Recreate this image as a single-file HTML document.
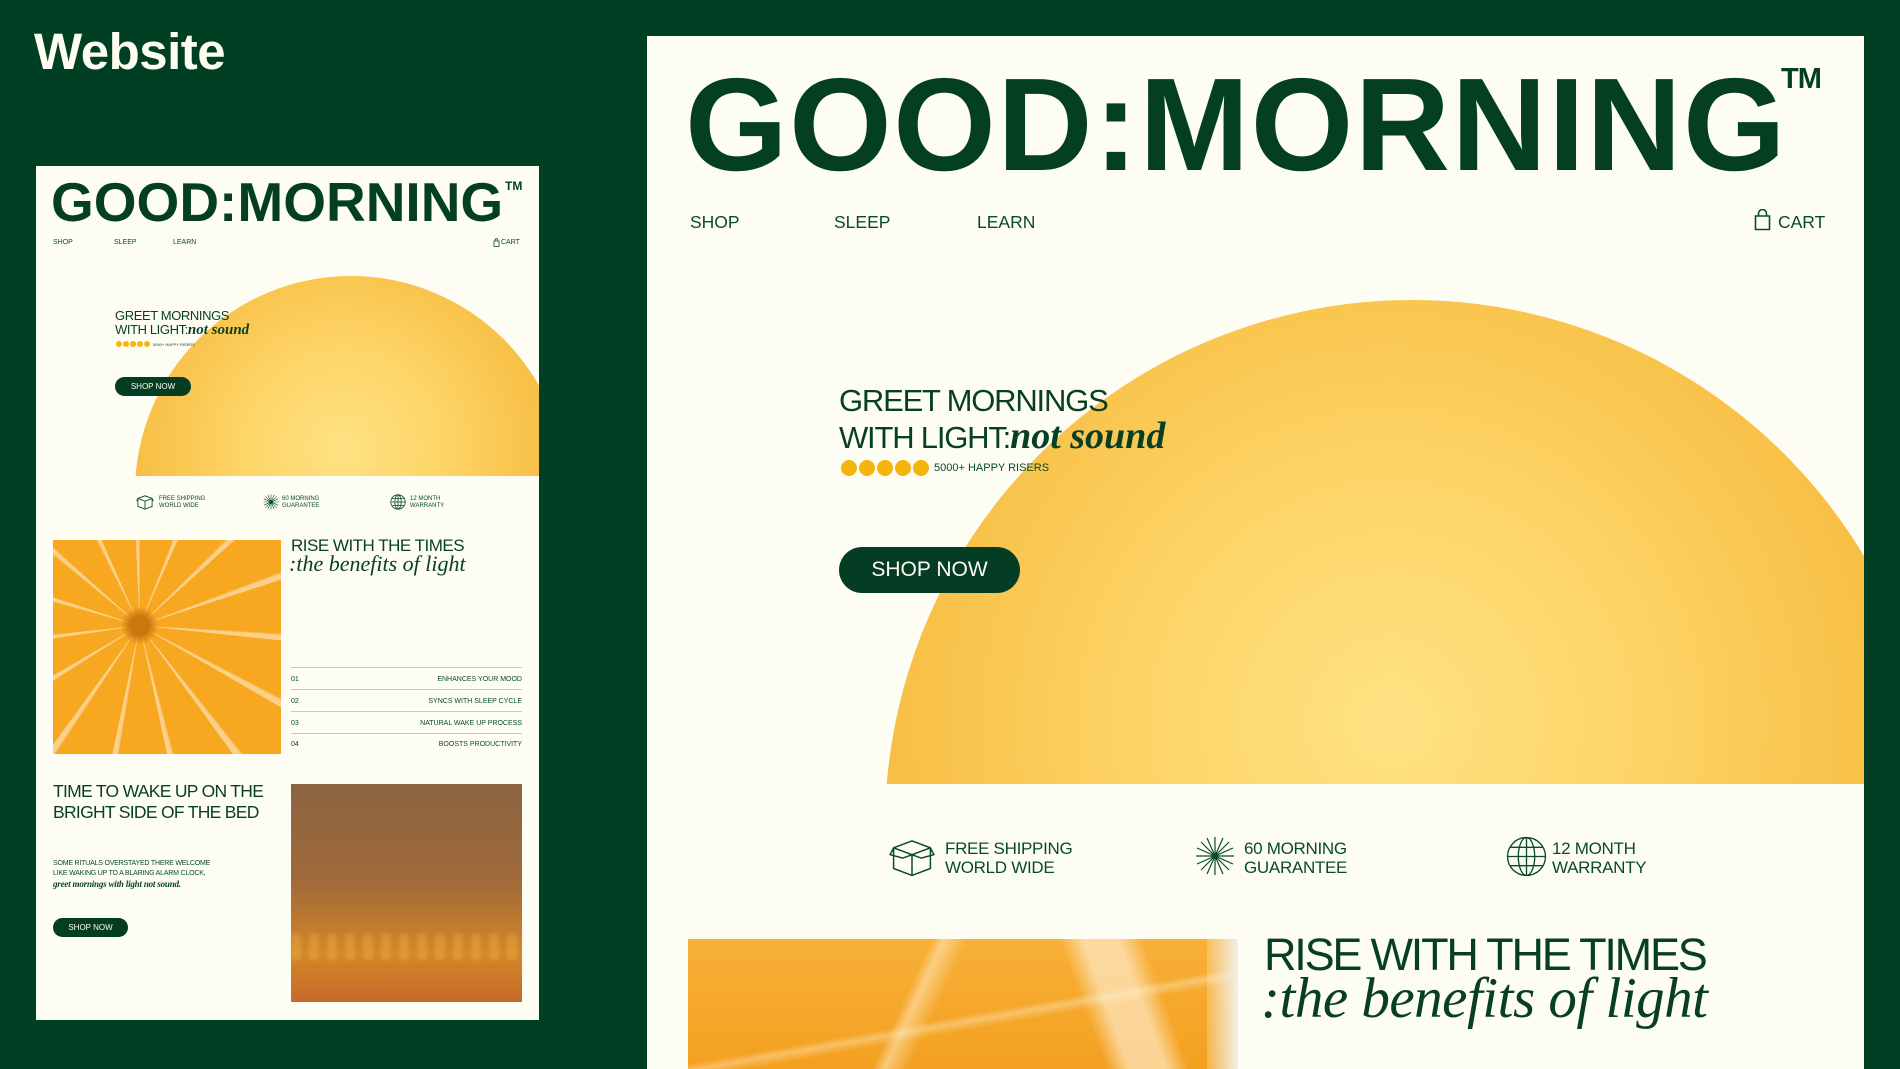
<!DOCTYPE html>
<html><head><meta charset="utf-8"><style>
*{margin:0;padding:0;box-sizing:border-box}
html,body{overflow:hidden}
body{width:1900px;height:1069px;background:#013f25;position:relative;overflow:hidden;font-family:"Liberation Sans",sans-serif;color:#0a4a2c}
.a{position:absolute;white-space:nowrap}
.card{position:absolute;background:#fdfdf3;overflow:hidden}
.g{color:#073f24}
.serif{font-family:"Liberation Serif",serif;font-style:italic}
.btn{position:absolute;background:#043d23;color:#fdfdf3;border-radius:40px;display:flex;align-items:center;justify-content:center}
.logo{font-weight:700;color:#053f23;line-height:1}
</style></head><body>

<div class="a" style="left:34px;top:22px;font-size:51px;font-weight:700;color:#fdfdf0;letter-spacing:-0.5px">Website</div>

<!-- LEFT CARD -->
<div class="card" style="left:36px;top:166px;width:503px;height:854px">
  <div class="a" style="left:0;top:0;width:503px;height:310px;overflow:hidden">
    <div style="position:absolute;left:99px;top:110px;width:432px;height:432px;border-radius:50%;background:radial-gradient(circle at 48% 40%,#fee283 0%,#fdd466 30%,#f7bd42 62%,#ee9f24 90%,#e99520 100%)"></div>
  </div>
  <div class="a logo" style="left:15px;top:9px;font-size:55px">GOOD:MORNING</div>
  <div class="a" style="left:469px;top:13px;font-size:12px;font-weight:700;color:#053f23">TM</div>
  <div class="a" style="left:17px;top:73px;font-size:7px">SHOP</div>
  <div class="a" style="left:78px;top:73px;font-size:7px">SLEEP</div>
  <div class="a" style="left:137px;top:73px;font-size:7px">LEARN</div>
  <svg class="a" style="left:457px;top:72px" width="7" height="9" viewBox="0 0 7 9"><path d="M1 3h5v5.5H1z M2.2 3V2a1.3 1.3 0 012.6 0v1" fill="none" stroke="#0a4a2c" stroke-width=".8"/></svg>
  <div class="a" style="left:465px;top:73px;font-size:7px">CART</div>
  <div class="a g" style="left:79px;top:143px;font-size:13px;line-height:14px;letter-spacing:-.4px">GREET MORNINGS<br>WITH LIGHT:<span class="serif" style="font-size:15px;font-weight:700;letter-spacing:0;line-height:1">not sound</span></div>
  <div class="a" style="left:80px;top:175px;display:flex;gap:1px;align-items:center"><i style="width:6px;height:6px;border-radius:50%;background:#f5b50e"></i><i style="width:6px;height:6px;border-radius:50%;background:#f5b50e"></i><i style="width:6px;height:6px;border-radius:50%;background:#f5b50e"></i><i style="width:6px;height:6px;border-radius:50%;background:#f5b50e"></i><i style="width:6px;height:6px;border-radius:50%;background:#f5b50e"></i><span style="font-size:4px;margin-left:2px">5000+ HAPPY RISERS</span></div>
  <div class="btn" style="left:79px;top:211px;width:76px;height:19px;font-size:8px">SHOP NOW</div>
  <svg class="a" style="left:100px;top:328px" width="18" height="16" viewBox="0 0 40 36"><path d="M4 10l16-6 16 6v18l-16 6-16-6z M4 10l16 6 16-6 M20 16v18 M4 10l-3 6 M36 10l3 6" fill="none" stroke="#0a4a2c" stroke-width="2"/></svg>
  <div class="a" style="left:123px;top:330px;font-size:6px;line-height:7px">FREE SHIPPING<br>WORLD WIDE</div>
  <svg class="a" style="left:227px;top:328px" width="16" height="16" viewBox="0 0 40 40"><g stroke="#0a4a2c" stroke-width="1.5"><path d="M20 1v38M1 20h38M6 6l28 28M34 6L6 34M12 2l16 36M28 2L12 38M2 12l36 16M2 28l36-16"/></g></svg>
  <div class="a" style="left:246px;top:330px;font-size:6px;line-height:7px">60 MORNING<br>GUARANTEE</div>
  <svg class="a" style="left:354px;top:328px" width="16" height="16" viewBox="0 0 40 40"><g fill="none" stroke="#0a4a2c" stroke-width="2"><circle cx="20" cy="20" r="18"/><ellipse cx="20" cy="20" rx="8" ry="18"/><path d="M20 2v36M2 20h36M5 11h30M5 29h30"/></g></svg>
  <div class="a" style="left:374px;top:330px;font-size:6px;line-height:7px">12 MONTH<br>WARRANTY</div>
  <div class="a" style="left:17px;top:374px;width:228px;height:214px;background:radial-gradient(circle at 38% 40%,#c9780e 0 5%,transparent 10%),repeating-conic-gradient(from 0deg at 38% 40%,#f7a820 0 21deg,#fbd08a 22deg 24deg),#f5a11c"></div>
  <div class="a g" style="left:255px;top:370px;font-size:17px;letter-spacing:-.5px">RISE WITH THE TIMES</div>
  <div class="a serif g" style="left:253px;top:385px;font-size:22px">:the benefits of light</div>
  <div class="a" style="left:255px;top:501px;width:231px;border-top:1.5px solid #b8cfc2"></div>
  <div class="a" style="left:255px;top:523px;width:231px;border-top:1.5px solid #b8cfc2"></div>
  <div class="a" style="left:255px;top:545px;width:231px;border-top:1.5px solid #b8cfc2"></div>
  <div class="a" style="left:255px;top:567px;width:231px;border-top:1.5px solid #b8cfc2"></div>
  <div class="a" style="left:255px;top:510px;width:231px;font-size:7px;display:flex;justify-content:space-between"><span>01</span><span>ENHANCES YOUR MOOD</span></div>
  <div class="a" style="left:255px;top:532px;width:231px;font-size:7px;display:flex;justify-content:space-between"><span>02</span><span>SYNCS WITH SLEEP CYCLE</span></div>
  <div class="a" style="left:255px;top:554px;width:231px;font-size:7px;display:flex;justify-content:space-between"><span>03</span><span>NATURAL WAKE UP PROCESS</span></div>
  <div class="a" style="left:255px;top:575px;width:231px;font-size:7px;display:flex;justify-content:space-between"><span>04</span><span>BOOSTS PRODUCTIVITY</span></div>
  <div class="a g" style="left:17px;top:615px;font-size:17.5px;line-height:21px;letter-spacing:-.7px">TIME TO WAKE UP ON THE<br>BRIGHT SIDE OF THE BED</div>
  <div class="a" style="left:17px;top:693px;font-size:7px;line-height:10px;letter-spacing:-.2px">SOME RITUALS OVERSTAYED THERE WELCOME<br>LIKE WAKING UP TO A BLARING ALARM CLOCK,<br><span class="serif" style="font-size:9px;font-weight:700;color:#073f24">greet mornings with light not sound.</span></div>
  <div class="btn" style="left:17px;top:752px;width:75px;height:19px;font-size:8px">SHOP NOW</div>
  <div class="a" style="left:255px;top:618px;width:231px;height:218px;background:linear-gradient(180deg,#8c6440 0%,#a06a3a 45%,#d38628 78%,#c56a2a 100%)">
    <div style="position:absolute;left:0;top:150px;width:231px;height:26px;background:repeating-linear-gradient(90deg,rgba(255,210,90,.5) 0 10px,transparent 10px 18px);opacity:.5;filter:blur(2px)"></div>
  </div>
</div>

<!-- BIG PANEL -->
<div class="card" style="left:647px;top:36px;width:1217px;height:1033px">
  <div class="a" style="left:0;top:0;width:1217px;height:748px;overflow:hidden">
    <div style="position:absolute;left:238px;top:264px;width:1054px;height:1054px;border-radius:50%;background:radial-gradient(circle at 48% 40%,#fee283 0%,#fdd466 30%,#f7bd42 62%,#ee9f24 90%,#e99520 100%)"></div>
  </div>
  <div class="a logo" style="left:38px;top:23px;font-size:132px;letter-spacing:1.4px">GOOD:MORNING</div>
  <div class="a" style="left:1134px;top:27px;font-size:29px;font-weight:700;color:#053f23;letter-spacing:-1px">TM</div>
  <div class="a" style="left:43px;top:176px;font-size:17.5px">SHOP</div>
  <div class="a" style="left:187px;top:176px;font-size:17.5px">SLEEP</div>
  <div class="a" style="left:330px;top:176px;font-size:17.5px">LEARN</div>
  <svg class="a" style="left:1107px;top:173px" width="17" height="22" viewBox="0 0 17 22"><path d="M1.5 7h14v13.5h-14z M4.5 7V4.5a4 4 0 018 0V7" fill="none" stroke="#0a4a2c" stroke-width="1.6"/></svg>
  <div class="a" style="left:1131px;top:176px;font-size:17.5px">CART</div>
  <div class="a g" style="left:192px;top:348px;font-size:31px;line-height:33px;letter-spacing:-1.2px">GREET MORNINGS<br>WITH LIGHT:<span class="serif" style="font-size:38px;font-weight:700;letter-spacing:0;line-height:1">not sound</span></div>
  <div class="a" style="left:194px;top:424px;display:flex;gap:2px;align-items:center"><i style="width:16px;height:16px;border-radius:50%;background:#f5b50e"></i><i style="width:16px;height:16px;border-radius:50%;background:#f5b50e"></i><i style="width:16px;height:16px;border-radius:50%;background:#f5b50e"></i><i style="width:16px;height:16px;border-radius:50%;background:#f5b50e"></i><i style="width:16px;height:16px;border-radius:50%;background:#f5b50e"></i><span style="font-size:11px;margin-left:3px">5000+ HAPPY RISERS</span></div>
  <div class="btn" style="left:192px;top:511px;width:181px;height:46px;font-size:21px">SHOP NOW</div>

  <svg class="a" style="left:242px;top:800px" width="46" height="42" viewBox="0 0 40 36"><path d="M4 10l16-6 16 6v18l-16 6-16-6z M4 10l16 6 16-6 M20 16v18 M4 10l-3 6 11 3 8-3 M36 10l3 6-11 3-8-3" fill="none" stroke="#0a4a2c" stroke-width="1.3"/></svg>
  <div class="a" style="left:298px;top:803px;font-size:17px;line-height:19px;letter-spacing:-.3px">FREE SHIPPING<br>WORLD WIDE</div>
  <svg class="a" style="left:548px;top:800px" width="40" height="40" viewBox="0 0 40 40"><g stroke="#0a4a2c" stroke-width="1.2"><path d="M20 1v38M1 20h38M6 6l28 28M34 6L6 34M12 2l16 36M28 2L12 38M2 12l36 16M2 28l36-16"/></g></svg>
  <div class="a" style="left:597px;top:803px;font-size:17px;line-height:19px;letter-spacing:-.3px">60 MORNING<br>GUARANTEE</div>
  <svg class="a" style="left:859px;top:800px" width="41" height="41" viewBox="0 0 40 40"><g fill="none" stroke="#0a4a2c" stroke-width="1.3"><circle cx="20" cy="20" r="18.5"/><ellipse cx="20" cy="20" rx="8" ry="18.5"/><path d="M20 1.5v37M1.5 20h37M4.5 11h31M4.5 29h31"/></g></svg>
  <div class="a" style="left:905px;top:803px;font-size:17px;line-height:19px;letter-spacing:-.3px">12 MONTH<br>WARRANTY</div>

  <div class="a" style="left:41px;top:903px;width:550px;height:130px;background:linear-gradient(115deg,transparent 0 40%,rgba(255,240,210,.5) 42%,transparent 46%),linear-gradient(70deg,transparent 0 70%,rgba(255,245,225,.6) 74% 80%,transparent 84%),linear-gradient(170deg,transparent 0 55%,rgba(255,235,200,.4) 58%,transparent 62%),linear-gradient(180deg,#f7b038,#f4a020)"></div>
  <div class="a" style="left:560px;top:903px;width:31px;height:130px;background:linear-gradient(90deg,rgba(255,250,240,.2),#f3f0e6)"></div>
  <div class="a g" style="left:617px;top:893px;font-size:45px;letter-spacing:-2.2px">RISE WITH THE TIMES</div>
  <div class="a serif g" style="left:614px;top:930px;font-size:57px;letter-spacing:-.5px">:the benefits of light</div>
</div>
</body></html>
